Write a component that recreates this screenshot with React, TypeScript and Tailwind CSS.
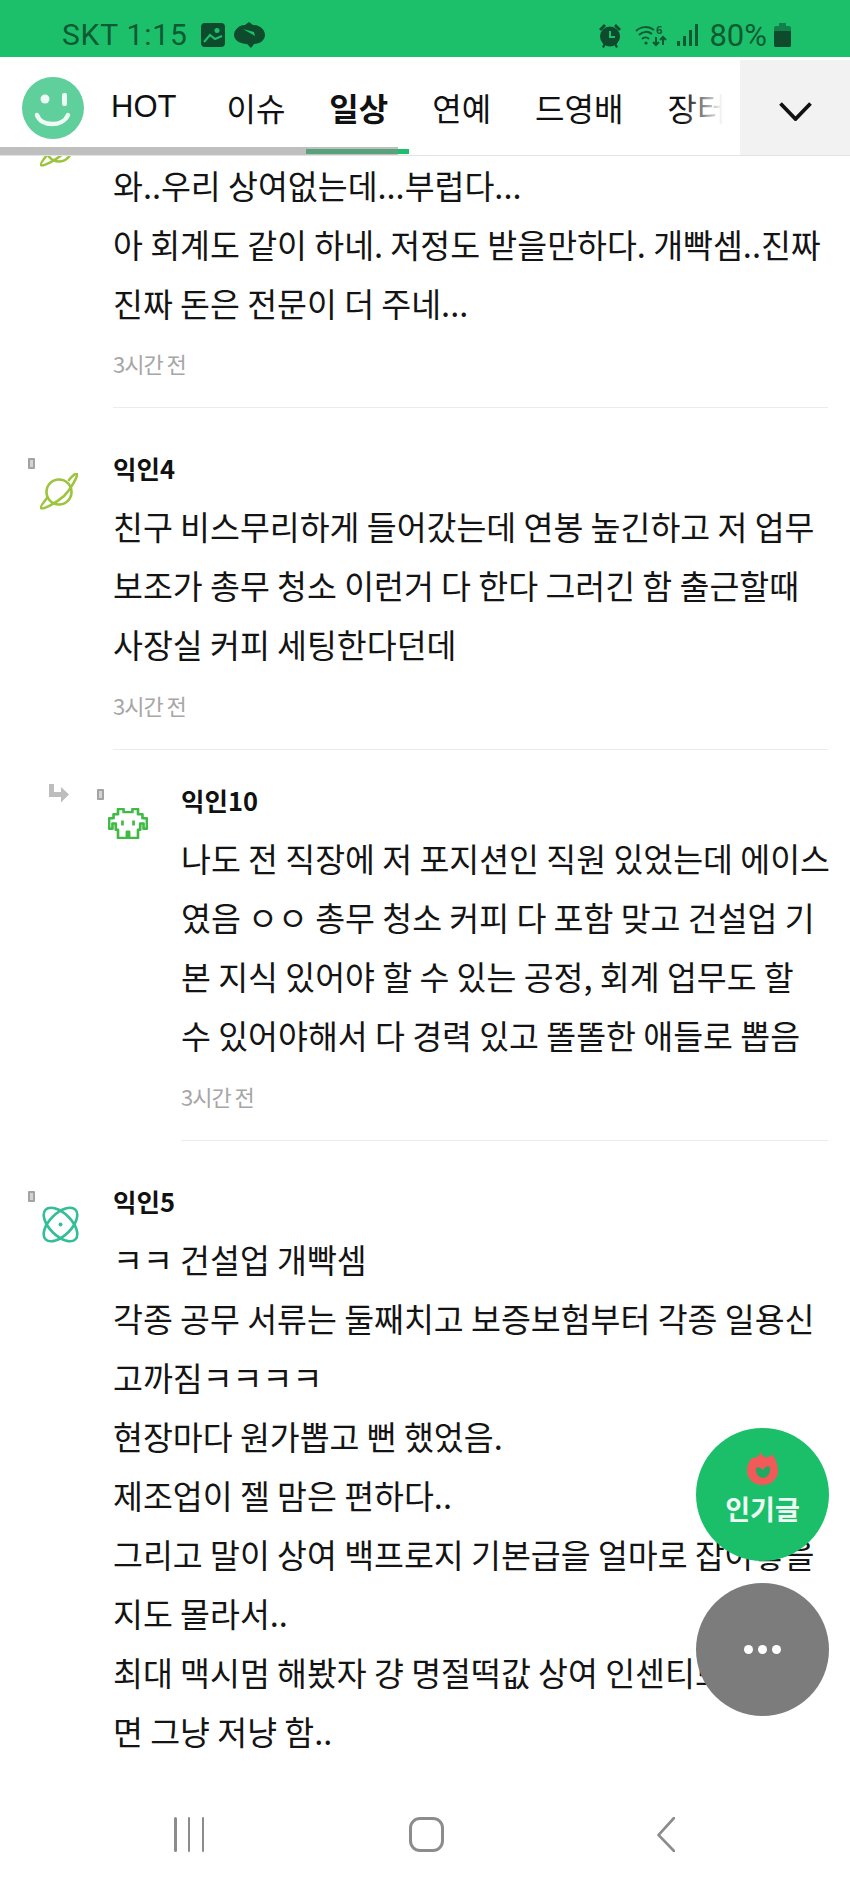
const KR = '"Noto Sans CJK KR", "Noto Sans", sans-serif';

const tabs = ['이슈', '일상', '연예', '드영배', '장터'];

function Planet() {
  return (
    <svg width="38" height="38" viewBox="0 0 38 38" fill="none" stroke="#9cc43c" strokeWidth="2.6" strokeLinecap="round">
      <circle cx="19" cy="19" r="12.5" />
      <path d="M7 25 C 3 30 0 34 1 35 C 3 37 16 30 24 23 C 31 16 38 3 37 1 C 36 0 33 2 29 7" />
    </svg>
  );
}

function Invader() {
  return (
    <svg width="40" height="31" viewBox="2 1 36 30" preserveAspectRatio="none" fill="none" stroke="#3fbb45" strokeWidth="2.4" strokeLinejoin="round">
      <path d="M11 2 h5 v3 h8 v-3 h5 v5 h4 v4 h4 v10 h-3 v-5 h-3 v6 h-2 v8 h-8 v-6 h-2 v6 h-8 v-8 h-2 v-6 h-3 v5 h-3 v-10 h4 v-4 h4 z" />
      <path d="M15 13 v5 M25 13 v5" />
    </svg>
  );
}

function Atom() {
  return (
    <svg width="39" height="39" viewBox="0 0 39 39" fill="none" stroke="#33bd98" strokeWidth="2.6">
      <ellipse cx="19.5" cy="19.5" rx="21" ry="11" transform="rotate(45 19.5 19.5)" />
      <ellipse cx="19.5" cy="19.5" rx="21" ry="11" transform="rotate(-45 19.5 19.5)" />
      <circle cx="19.5" cy="19.5" r="2" fill="#33bd98" stroke="none" />
    </svg>
  );
}

function Marker() {
  return <div className="w-[7px] h-[11px] border-2 border-[#a3a3a3] bg-[#d4d4d4] rounded-[1px]" />;
}

function Lines({ lines }: { lines: string[] }) {
  return (
    <div className="text-[32.5px] leading-[59px] text-[#141414]">
      {lines.map((line) => (
        <div key={line} className="whitespace-nowrap">{line}</div>
      ))}
    </div>
  );
}

function Comment({ name, lines, icon, iconGap, reply }: { name: string; lines: string[]; icon: React.ReactNode; iconGap: string; reply?: boolean }) {
  return (
    <div className="flex">
      {reply ? (
        <div className="w-[181px] shrink-0 flex pl-[49px]">
          <div className="w-[48px] pt-[34px]">
            <svg width="20" height="19" viewBox="0 0 20 19" fill="#bdbdbd">
              <path d="M0 0 h5 v8 h7 v-5 l8 7.5 l-8 8 v-5.5 h-12 z" />
            </svg>
          </div>
          <div className="pt-[39px]">
            <Marker />
            <div className={iconGap}>{icon}</div>
          </div>
        </div>
      ) : (
        <div className="w-[113px] shrink-0 pl-[28px] pt-[50px]">
          <Marker />
          <div className={iconGap}>{icon}</div>
        </div>
      )}
      <div className={`flex-1 ${reply ? 'pt-[35px]' : 'pt-[45px]'}`}>
        <div className="text-[25.5px] leading-[30px] font-bold text-[#111] mb-[13px]">{name}</div>
        <Lines lines={lines} />
      </div>
    </div>
  );
}

function Meta({ reply, first }: { reply?: boolean; first?: boolean }) {
  return (
    <div className={reply ? 'ml-[181px]' : 'ml-[113px]'}>
      <div className={`${first ? 'mt-[16px]' : 'mt-[17px]'} text-[22px] leading-[30px] tracking-[-1px] text-[#a6a6a6]`}>3시간 전</div>
      <div className="mt-[29px] mr-[22px] h-px bg-[#ececec]" />
    </div>
  );
}

export default function App() {
  return (
    <div className="relative w-[850px] h-[1889px] overflow-hidden bg-white flex flex-col" style={{ fontFamily: KR }}>
      {/* status bar */}
      <div className="h-[57px] shrink-0 bg-[#1cc06a] flex items-center pl-[62px] pr-[59px] pt-[13px] text-[#0e5a33]">
        <span className="text-[30px] leading-none tracking-[0.8px]" style={{ fontFamily: 'Roboto, sans-serif' }}>SKT 1:15</span>
        <svg className="ml-[13px]" width="24" height="24" viewBox="0 0 24 24">
          <rect x="1" y="1" width="22" height="22" rx="3" fill="#0e4a2c" stroke="#0e4a2c" strokeWidth="2" />
          <circle cx="16" cy="7.5" r="2.5" fill="#1cc06a" />
          <path d="M3 19 L9 12 L14 16 L21 13" fill="none" stroke="#1cc06a" strokeWidth="2" />
        </svg>
        <svg className="ml-[9px]" width="31" height="26" viewBox="0 0 31 26" fill="#0e4a2c">
          <path d="M15 0 L19 3 C 26 3 31 8 31 13 C 31 18 26 22 20 22 L 17 26 L 13 22 C 6 22 0 18 0 13 C 0 8 5 3 11 3 Z" />
          <path d="M9 7 L21 14 L20 10 Z" fill="#1cc06a" />
        </svg>
        <div className="flex-1" />
        <svg width="24" height="25" viewBox="0 0 24 25" fill="#0e4a2c">
          <circle cx="12" cy="13.5" r="10" />
          <path d="M1 6 L6 1 L8 3 L3 8 Z M23 6 L18 1 L16 3 L21 8 Z M4 24 L6 20 L8 21 L6 25 Z M20 24 L18 20 L16 21 L18 25 Z" />
          <path d="M12 8 V14 H17" fill="none" stroke="#1cc06a" strokeWidth="2" />
        </svg>
        <svg className="ml-[13px]" width="32" height="23" viewBox="0 0 32 23" fill="none" stroke="#0e5a33" strokeWidth="2">
          <path d="M1 7 C 6 2 14 2 19 6 M4 11 C 8 7 13 7 17 10 M7 15 C 9 13 12 13 14 15" />
          <circle cx="11" cy="19" r="1.6" fill="#0e5a33" stroke="none" />
          <path d="M21 13 V21 M18 18 L21 21 L24 18 M28 21 V13 M25 16 L28 13 L31 16" />
          <text x="21" y="10" fontSize="11" fontWeight="700" fill="#0e5a33" stroke="none">6</text>
        </svg>
        <div className="ml-[10px] flex items-end gap-[3px] h-[22px]">
          <div className="w-[3px] h-[5px] bg-[#0e5a33]" />
          <div className="w-[3px] h-[10px] bg-[#0e5a33]" />
          <div className="w-[3px] h-[16px] bg-[#0e5a33]" />
          <div className="w-[3px] h-[22px] bg-[#0e5a33]" />
        </div>
        <span className="ml-[11px] text-[31px] leading-none" style={{ fontFamily: 'Roboto, sans-serif' }}>80%</span>
        <svg className="ml-[7px]" width="17" height="24" viewBox="0 0 17 24">
          <path d="M5 0 h7 v3 h3 a2 2 0 0 1 2 2 v17 a2 2 0 0 1 -2 2 h-13 a2 2 0 0 1 -2 -2 v-17 a2 2 0 0 1 2 -2 h3 z" fill="#12804a" />
          <path d="M0 8 h17 v14 a2 2 0 0 1 -2 2 h-13 a2 2 0 0 1 -2 -2 z" fill="#0e4a2c" />
        </svg>
      </div>

      {/* category tabs */}
      <div className="relative z-10 h-[99px] shrink-0 bg-white border-b border-[#e4e4e4] flex">
        <div className="w-[111px] shrink-0 pl-[22px] pt-[20px]">
          <svg width="62" height="62" viewBox="0 0 62 62">
            <circle cx="31" cy="31" r="31" fill="#5fcf9b" />
            <circle cx="23" cy="22" r="4.5" fill="#eefaf4" />
            <rect x="40" y="16" width="5" height="13" rx="2" fill="#eefaf4" />
            <path d="M15 38 C 19 50 41 50 46 38" fill="none" stroke="#eefaf4" strokeWidth="4.5" strokeLinecap="round" />
          </svg>
        </div>
        <div className="relative w-[629px] overflow-hidden flex items-center gap-[44px] pt-[2px] text-[32px] text-[#111] whitespace-nowrap">
          <span className="mr-[6px] text-[31px]" style={{ fontFamily: '"Liberation Sans", sans-serif' }}>HOT</span>
          {tabs.map((t) => (
            <span key={t} className={t === '일상' ? 'font-bold' : ''}>{t}</span>
          ))}
          <div className="absolute right-[17px] top-0 bottom-0 w-[40px] bg-gradient-to-r from-transparent to-white" />
        </div>
        <div className="flex-1 mt-[3px] pt-[8px] bg-[#f2f2f2] flex items-center justify-center">
          <svg width="33" height="19" viewBox="0 0 33 19" fill="none" stroke="#111" strokeWidth="3.8">
            <path d="M1.5 1.5 L16.5 17 L31.5 1.5" />
          </svg>
        </div>
        <div className="absolute left-[306px] bottom-[1px] w-[103px] h-[5px] bg-[#1cc06a]" />
        <div className="absolute left-0 bottom-0 w-[398px] h-[8px] bg-[#8a8a8a]/55" />
      </div>

      {/* comment list */}
      <div className="flex-1 overflow-hidden">
        <div className="flex -mt-px">
          <div className="w-[113px] shrink-0 pl-[40px] -mt-[25px]">
            <Planet />
          </div>
          <Lines lines={['와..우리 상여없는데...부럽다...', '아 회계도 같이 하네. 저정도 받을만하다. 개빡셈..진짜', '진짜 돈은 전문이 더 주네...']} />
        </div>
        <Meta first />
        <Comment
          name="익인4"
          icon={<Planet />}
          iconGap="mt-[4px] ml-[12px]"
          lines={['친구 비스무리하게 들어갔는데 연봉 높긴하고 저 업무', '보조가 총무 청소 이런거 다 한다 그러긴 함 출근할때', '사장실 커피 세팅한다던데']}
        />
        <Meta />
        <Comment
          reply
          name="익인10"
          icon={<Invader />}
          iconGap="mt-[8px] ml-[11px]"
          lines={['나도 전 직장에 저 포지션인 직원 있었는데 에이스', '였음 ㅇㅇ 총무 청소 커피 다 포함 맞고 건설업 기', '본 지식 있어야 할 수 있는 공정, 회계 업무도 할', '수 있어야해서 다 경력 있고 똘똘한 애들로 뽑음']}
        />
        <Meta reply />
        <Comment
          name="익인5"
          icon={<Atom />}
          iconGap="mt-[3px] ml-[13px]"
          lines={['ㅋㅋ 건설업 개빡셈', '각종 공무 서류는 둘째치고 보증보험부터 각종 일용신', '고까짐ㅋㅋㅋㅋ', '현장마다 원가뽑고 뻔 했었음.', '제조업이 젤 맘은 편하다..', '그리고 말이 상여 백프로지 기본급을 얼마로 잡아놓을', '지도 몰라서..', '최대 맥시멈 해봤자 걍 명절떡값 상여 인센티브 없으', '면 그냥 저냥 함..']}
        />
      </div>

      {/* system nav */}
      <div className="h-[129px] shrink-0 bg-white flex items-start pl-[174px] pt-[57px]">
        <div className="w-[30px] h-[35px] flex justify-between">
          <div className="w-[2.5px] h-full rounded-full bg-[#8c8c8c]" />
          <div className="w-[2.5px] h-full rounded-full bg-[#8c8c8c]" />
          <div className="w-[2.5px] h-full rounded-full bg-[#8c8c8c]" />
        </div>
        <div className="ml-[205px] w-[35px] h-[35px] rounded-[11px] border-[3px] border-[#8c8c8c]" />
        <svg className="ml-[213px]" width="18" height="35" viewBox="0 0 18 35" fill="none" stroke="#8c8c8c" strokeWidth="2.6" strokeLinecap="round">
          <path d="M17 1 L1.5 18 L17 34" />
        </svg>
      </div>

      {/* floating buttons */}
      <div className="absolute z-20 left-[696px] top-[1428px] w-[133px] h-[133px] rounded-full bg-[#1cbf69] flex flex-col items-center pt-[24px]">
        <svg width="31" height="33" viewBox="0 0 31 33">
          <path d="M14 0 C 15 4 18 6 21 5 C 23 5 24 3 25 2 C 29 7 31 13 31 19 C 31 27 24 33 15.5 33 C 7 33 0 27 0 19 C 0 12 3 8 6 5 C 7 7 11 6 14 0 Z" fill="#f25a5a" />
          <path d="M9 16 C 12 14 14 16 16 18 C 18 15 20 13 23 15 C 24 22 20 26 16 26 C 12 26 8 22 9 16 Z" fill="#23a862" />
        </svg>
        <span className="mt-[8px] text-[27px] leading-[32px] font-bold text-[#eefaf4]">인기글</span>
      </div>
      <div className="absolute z-20 left-[696px] top-[1583px] w-[133px] h-[133px] rounded-full bg-[#7c7c7c] flex items-center justify-center gap-[5px]">
        <div className="w-[9px] h-[9px] rounded-full bg-white" />
        <div className="w-[9px] h-[9px] rounded-full bg-white" />
        <div className="w-[9px] h-[9px] rounded-full bg-white" />
      </div>
    </div>
  );
}
